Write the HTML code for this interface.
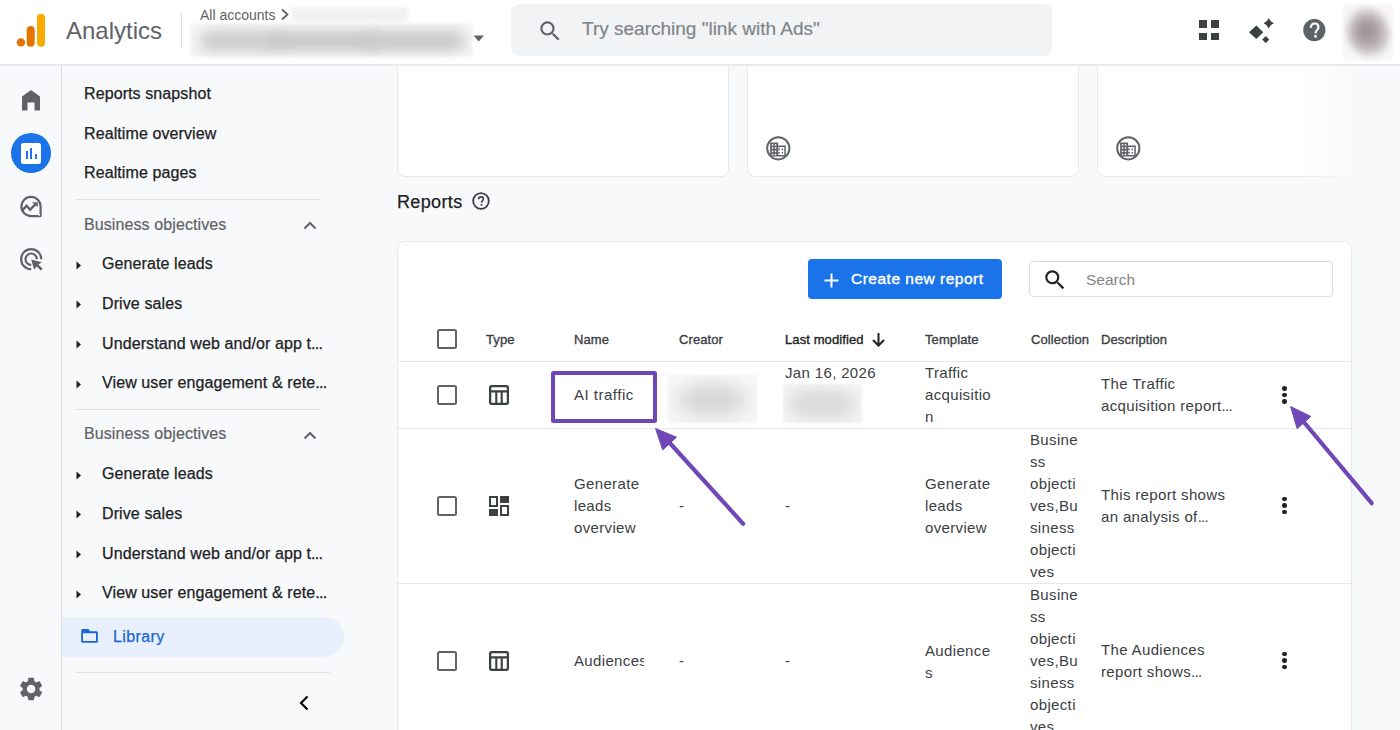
<!DOCTYPE html>
<html><head><meta charset="utf-8">
<style>
*{box-sizing:border-box;margin:0;padding:0}
html,body{width:1400px;height:730px;overflow:hidden;background:#f8f9fa;font-family:"Liberation Sans",sans-serif;color:#202124}
.a{position:absolute}
.t{position:absolute;white-space:nowrap;line-height:1}
#hdr{position:absolute;left:0;top:0;width:1400px;height:66px;background:#fff;border-bottom:2px solid #e9eaed}
#rail{position:absolute;left:0;top:66px;width:62px;height:664px;background:#f8f9fa;border-right:1px solid #dadce0}
.mi{position:absolute;font-size:16px;letter-spacing:0.1px;-webkit-text-stroke:0.25px currentColor;color:#202124;white-space:nowrap;line-height:1}
.sec{position:absolute;font-size:16px;letter-spacing:0.1px;-webkit-text-stroke:0.2px currentColor;color:#5f6368;white-space:nowrap;line-height:1}
.div{position:absolute;height:1px;background:#e3e3e3}
.card{position:absolute;background:#fff;border:1px solid #e6e8eb;border-radius:8px}
.th{position:absolute;font-size:13px;letter-spacing:0.1px;-webkit-text-stroke:0.35px currentColor;color:#3c4043;white-space:nowrap;line-height:1}
.td{position:absolute;font-size:15px;letter-spacing:0.35px;color:#3c4043;white-space:nowrap;line-height:22px;margin-top:1px}
.cb{position:absolute;width:20px;height:20px;border:2.2px solid #5f6368;border-radius:2.5px;margin-left:0.6px}
.rowdiv{position:absolute;left:398px;width:953px;height:1px;background:#e6e8eb}
.kb{position:absolute;width:4.6px;height:4.6px;border-radius:50%;background:#202124}
</style></head><body>

<!-- HEADER -->
<div id="hdr"></div>
<svg class="a" style="left:16px;top:13px" width="30" height="34" viewBox="0 0 30 34">
  <rect x="21" y="0.7" width="8" height="33" rx="4" fill="#f9ab00"/>
  <rect x="10.7" y="13" width="8" height="20.7" rx="4" fill="#e37400"/>
  <circle cx="4.9" cy="29.4" r="4.2" fill="#e37400"/>
</svg>
<div class="t" style="left:66px;top:19px;font-size:24px;color:#5f6368">Analytics</div>
<div class="a" style="left:181px;top:13px;width:1px;height:35px;background:#dadce0"></div>
<div class="t" style="left:200px;top:8px;font-size:14px;color:#5f6368">All accounts</div>
<svg class="a" style="left:279px;top:8px" width="12" height="13" viewBox="0 0 12 13"><path d="M3 1.5 L8.5 6.5 L3 11.5" stroke="#5f6368" stroke-width="1.8" fill="none"/></svg>
<div class="a" style="left:291px;top:7px;width:117px;height:14px;background:#f1f1f1;filter:blur(2px)"></div>
<div class="a" style="left:190px;top:24px;width:282px;height:32px;background:#f3f3f3;filter:blur(1px)"></div>
<div class="a" style="left:200px;top:31px;width:85px;height:20px;background:#cdcdcd;border-radius:10px;filter:blur(6px)"></div>
<div class="a" style="left:270px;top:31px;width:110px;height:20px;background:#c9c9c9;border-radius:10px;filter:blur(6px)"></div>
<div class="a" style="left:365px;top:31px;width:100px;height:20px;background:#cbcbcb;border-radius:10px;filter:blur(6px)"></div>
<svg class="a" style="left:473px;top:35px" width="12" height="7" viewBox="0 0 12 7"><path d="M0.5 0.5 L11 0.5 L5.75 6.5 Z" fill="#5f6368"/></svg>

<div class="a" style="left:511px;top:4px;width:541px;height:52px;background:#f1f3f4;border-radius:8px"></div>
<svg class="a" style="left:537px;top:17.5px" width="26.4" height="26.4" viewBox="0 0 24 24"><path fill="#5f6368" d="M15.5 14h-.79l-.28-.27A6.471 6.471 0 0 0 16 9.5 6.5 6.5 0 1 0 9.5 16c1.61 0 3.09-.59 4.23-1.57l.27.28v.79l5 4.99L20.49 19l-4.99-5zm-6 0C7.01 14 5 11.99 5 9.5S7.01 5 9.5 5 14 7.01 14 9.5 11.99 14 9.5 14z"/></svg>
<div class="t" style="left:582px;top:19px;font-size:19px;-webkit-text-stroke:0.2px #80868b;color:#80868b">Try searching "link with Ads"</div>

<!-- apps grid -->
<div class="a" style="left:1199px;top:20px;width:7.5px;height:7.5px;background:#3c4043"></div>
<div class="a" style="left:1211px;top:20px;width:7.5px;height:7.5px;background:#3c4043"></div>
<div class="a" style="left:1199px;top:32.5px;width:7.5px;height:7.5px;background:#3c4043"></div>
<div class="a" style="left:1211px;top:32.5px;width:7.5px;height:7.5px;background:#3c4043"></div>
<!-- sparkle -->
<svg class="a" style="left:1248px;top:17px" width="28" height="28" viewBox="0 0 28 28">
  <path d="M1 15.2 L8.3 8.4 L15.3 15.2 L8.3 22.1 Z" fill="#3c4043"/>
  <path d="M14.2 22.5 L17.8 19 L21.2 22.5 L17.8 26.2 Z" fill="#3c4043"/>
  <path d="M20.8 1.1 Q22.2 4.9 26 6.3 Q22.2 7.7 20.8 11.6 Q19.4 7.7 15.6 6.3 Q19.4 4.9 20.8 1.1 Z" fill="#3c4043"/>
</svg>
<!-- help -->
<svg class="a" style="left:1303px;top:19px" width="23" height="23" viewBox="0 0 24 24"><circle cx="11.8" cy="11.5" r="11.6" fill="#5f6368"/><path d="M8.1 9.1 C8.1 6.4 9.8 4.7 12.1 4.7 C14.4 4.7 16.1 6.3 16.1 8.5 C16.1 11.4 13.1 11.8 13.1 15" stroke="#fff" stroke-width="2.3" fill="none"/><rect x="11.8" y="16.8" width="2.6" height="2.6" fill="#fff"/></svg>
<!-- avatar blurred -->
<div class="a" style="left:1343px;top:3.5px;width:50px;height:57px;background:#f8f7f7;filter:blur(1.5px)"></div>
<div class="a" style="left:1352px;top:18px;width:38px;height:38px;border-radius:50%;background:radial-gradient(circle at 50% 50%,#a9a5b6 0%,rgba(200,198,210,0.7) 50%,rgba(248,247,247,0) 100%);filter:blur(3px)"></div>
<div class="a" style="left:1346px;top:8px;width:42px;height:46px;border-radius:50%;background:radial-gradient(ellipse at 50% 50%,#9d8f93 0%,#a89c9f 28%,rgba(200,190,192,0.8) 58%,rgba(248,247,247,0) 100%);filter:blur(3px)"></div>

<!-- RAIL -->
<div id="rail"></div>
<svg class="a" style="left:22px;top:90px" width="18" height="21" viewBox="0 0 18 21"><path d="M0 6.5 L9 0 L18 6.5 L18 20.5 L12.5 20.5 L12.5 12.5 L5.5 12.5 L5.5 20.5 L0 20.5 Z" fill="#5f6368"/></svg>
<div class="a" style="left:11px;top:133px;width:40px;height:40px;border-radius:50%;background:#1a73e8"></div>
<div class="a" style="left:21px;top:143px;width:20px;height:20.5px;border-radius:2.5px;background:#fff"></div>
<div class="a" style="left:25.5px;top:151px;width:2px;height:8px;background:#1a73e8"></div>
<div class="a" style="left:30px;top:148px;width:2px;height:11px;background:#1a73e8"></div>
<div class="a" style="left:34.5px;top:154px;width:2px;height:5px;background:#1a73e8"></div>
<svg class="a" style="left:19px;top:194px" width="24" height="24" viewBox="0 0 24 24">
  <path d="M12 22.1 A9.6 9.6 0 1 1 21.6 12.5 L21.6 22.1 Z" fill="none" stroke="#5f6368" stroke-width="2.2" stroke-linejoin="round"/>
  <path d="M3.2 16.6 L7.6 11.8 L11.1 15.7 L16.6 10.2" fill="none" stroke="#5f6368" stroke-width="2.4"/>
  <path d="M12.9 8.3 L18.8 8.3 L18.8 12.9 Z" fill="#5f6368"/>
  <circle cx="20.3" cy="20.8" r="0.9" fill="#fff"/>
</svg>
<svg class="a" style="left:19px;top:247px" width="25" height="25" viewBox="0 0 25 25">
  <path d="M12.2 22.3 A10.1 10.1 0 1 1 22.3 12.2" fill="none" stroke="#5f6368" stroke-width="2.2"/>
  <path d="M12.2 17.9 A5.7 5.7 0 1 1 17.9 12.2" fill="none" stroke="#5f6368" stroke-width="2.2"/>
  <path d="M12.2 12.4 L22.8 15.3 L19.4 17.6 L23.6 21.8 L21.8 23.6 L17.6 19.4 L15.1 22.8 Z" fill="#5f6368"/>
</svg>
<svg class="a" style="left:16.9px;top:674.8px" width="28.2" height="28.2" viewBox="0 0 24 24"><path fill="#5f6368" d="M19.14 12.94c.04-.3.06-.61.06-.94 0-.32-.02-.64-.07-.94l2.03-1.58a.49.49 0 0 0 .12-.61l-1.92-3.32a.488.488 0 0 0-.59-.22l-2.39.96c-.5-.38-1.03-.7-1.62-.94l-.36-2.54a.484.484 0 0 0-.48-.41h-3.84c-.24 0-.43.17-.47.41l-.36 2.54c-.59.24-1.13.57-1.62.94l-2.39-.96c-.22-.08-.47 0-.59.22L2.74 8.87c-.12.21-.08.47.12.61l2.03 1.58c-.05.3-.09.63-.09.94s.02.64.07.94l-2.03 1.58a.49.49 0 0 0-.12.61l1.92 3.32c.12.22.37.29.59.22l2.39-.96c.5.38 1.03.7 1.62.94l.36 2.54c.05.24.24.41.48.41h3.84c.24 0 .44-.17.47-.41l.36-2.54c.59-.24 1.13-.56 1.62-.94l2.39.96c.22.08.47 0 .59-.22l1.92-3.32c.12-.22.07-.47-.12-.61l-2.01-1.58zM12 15.6c-1.98 0-3.6-1.62-3.6-3.6s1.62-3.6 3.6-3.6 3.6 1.62 3.6 3.6-1.62 3.6-3.6 3.6z"/></svg>

<!-- SIDE MENU -->
<div class="mi" style="left:84px;top:85.6px">Reports snapshot</div>
<div class="mi" style="left:84px;top:125.5px">Realtime overview</div>
<div class="mi" style="left:84px;top:165.1px">Realtime pages</div>
<div class="div" style="left:75px;top:199px;width:245px"></div>

<div class="sec" style="left:84px;top:216.5px">Business objectives</div>
<svg class="a" style="left:303px;top:220px" width="14" height="10" viewBox="0 0 14 10"><path d="M1.5 8.5 L7 3 L12.5 8.5" stroke="#5f6368" stroke-width="2" fill="none"/></svg>
<div class="mi" style="left:102px;top:256.3px">Generate leads</div>
<div class="mi" style="left:102px;top:295.9px">Drive sales</div>
<div class="mi" style="left:102px;top:335.7px">Understand web and/or app t<span style="letter-spacing:-0.7px">...</span></div>
<div class="mi" style="left:102px;top:375.1px">View user engagement &amp; rete<span style="letter-spacing:-0.7px">...</span></div>
<div class="div" style="left:75px;top:409px;width:245px"></div>

<div class="sec" style="left:84px;top:426.4px">Business objectives</div>
<svg class="a" style="left:303px;top:430px" width="14" height="10" viewBox="0 0 14 10"><path d="M1.5 8.5 L7 3 L12.5 8.5" stroke="#5f6368" stroke-width="2" fill="none"/></svg>
<div class="mi" style="left:102px;top:466.0px">Generate leads</div>
<div class="mi" style="left:102px;top:505.5px">Drive sales</div>
<div class="mi" style="left:102px;top:545.7px">Understand web and/or app t<span style="letter-spacing:-0.7px">...</span></div>
<div class="mi" style="left:102px;top:585.2px">View user engagement &amp; rete<span style="letter-spacing:-0.7px">...</span></div>

<svg class="a" style="left:76px;top:260.8px" width="6" height="9" viewBox="0 0 6 9"><path d="M0.5 0.5 L5 4.5 L0.5 8.5 Z" fill="#202124"/></svg>
<svg class="a" style="left:76px;top:300.4px" width="6" height="9" viewBox="0 0 6 9"><path d="M0.5 0.5 L5 4.5 L0.5 8.5 Z" fill="#202124"/></svg>
<svg class="a" style="left:76px;top:340.2px" width="6" height="9" viewBox="0 0 6 9"><path d="M0.5 0.5 L5 4.5 L0.5 8.5 Z" fill="#202124"/></svg>
<svg class="a" style="left:76px;top:379.6px" width="6" height="9" viewBox="0 0 6 9"><path d="M0.5 0.5 L5 4.5 L0.5 8.5 Z" fill="#202124"/></svg>
<svg class="a" style="left:76px;top:470.5px" width="6" height="9" viewBox="0 0 6 9"><path d="M0.5 0.5 L5 4.5 L0.5 8.5 Z" fill="#202124"/></svg>
<svg class="a" style="left:76px;top:510px" width="6" height="9" viewBox="0 0 6 9"><path d="M0.5 0.5 L5 4.5 L0.5 8.5 Z" fill="#202124"/></svg>
<svg class="a" style="left:76px;top:550.2px" width="6" height="9" viewBox="0 0 6 9"><path d="M0.5 0.5 L5 4.5 L0.5 8.5 Z" fill="#202124"/></svg>
<svg class="a" style="left:76px;top:589.7px" width="6" height="9" viewBox="0 0 6 9"><path d="M0.5 0.5 L5 4.5 L0.5 8.5 Z" fill="#202124"/></svg>

<div class="a" style="left:62px;top:617px;width:282px;height:40px;background:#e8f0fe;border-radius:0 20px 20px 0"></div>
<svg class="a" style="left:80px;top:628px" width="19" height="16" viewBox="0 0 19 16"><path fill-rule="evenodd" fill="#1967d2" d="M2.7 1 H8.3 L10.3 3.3 H16.4 Q17.9 3.3 17.9 4.8 V13.3 Q17.9 14.8 16.4 14.8 H2.7 Q1.2 14.8 1.2 13.3 V2.5 Q1.2 1 2.7 1 Z M3 5.2 V13 H16 V5.2 Z"/></svg>
<div class="mi" style="left:113px;top:629px;color:#1967d2;letter-spacing:0.4px">Library</div>
<div class="div" style="left:76px;top:672px;width:254px"></div>
<svg class="a" style="left:298px;top:695px" width="12" height="16" viewBox="0 0 12 16"><path d="M9.5 1.5 L3 8 L9.5 14.5" stroke="#000" stroke-width="2.2" fill="none"/></svg>

<!-- TOP CARDS -->
<div class="a" style="left:0;top:66px;width:1400px;height:120px;overflow:hidden">
<div class="card" style="left:397px;top:-26px;width:332px;height:137px"></div>
<div class="card" style="left:747px;top:-26px;width:332px;height:137px"></div>
<div class="card" style="left:1097px;top:-26px;width:332px;height:137px"></div>
<div class="a" style="left:1300px;top:-26px;width:100px;height:140px;background:linear-gradient(to right,rgba(248,249,250,0),#f8f9fa 51px)"></div>
</div>
<!-- building icons -->
<svg class="a" style="left:766px;top:136px" width="25" height="25" viewBox="0 0 25 25">
  <circle cx="12.3" cy="12.3" r="11.1" fill="none" stroke="#5f6368" stroke-width="2"/>
  <path d="M4.1 20.5 L4.1 6.5 L12 6.5 L12 9.5 L19.8 9.5 L19.8 20.5 Z" fill="#5f6368"/>
  <g fill="#fff">
   <rect x="5.8" y="8.2" width="1.5" height="1.5"/><rect x="8.8" y="8.2" width="1.5" height="1.5"/>
   <rect x="5.8" y="11.2" width="1.5" height="1.5"/><rect x="8.8" y="11.2" width="1.5" height="1.5"/>
   <rect x="5.8" y="14.6" width="1.5" height="1.5"/><rect x="8.8" y="14.6" width="1.5" height="1.5"/>
   <rect x="5.8" y="17.8" width="1.5" height="1.5"/><rect x="8.8" y="17.8" width="1.5" height="1.5"/>
   <rect x="12.3" y="11.1" width="6" height="7.9"/>
  </g>
  <g fill="#5f6368"><rect x="12.3" y="12.6" width="1.5" height="1.5"/><rect x="15.6" y="12.6" width="1.5" height="1.5"/><rect x="12.3" y="16" width="1.5" height="1.5"/><rect x="15.6" y="16" width="1.5" height="1.5"/></g>
</svg>
<svg class="a" style="left:1116px;top:136px" width="25" height="25" viewBox="0 0 25 25">
  <circle cx="12.3" cy="12.3" r="11.1" fill="none" stroke="#5f6368" stroke-width="2"/>
  <path d="M4.1 20.5 L4.1 6.5 L12 6.5 L12 9.5 L19.8 9.5 L19.8 20.5 Z" fill="#5f6368"/>
  <g fill="#fff">
   <rect x="5.8" y="8.2" width="1.5" height="1.5"/><rect x="8.8" y="8.2" width="1.5" height="1.5"/>
   <rect x="5.8" y="11.2" width="1.5" height="1.5"/><rect x="8.8" y="11.2" width="1.5" height="1.5"/>
   <rect x="5.8" y="14.6" width="1.5" height="1.5"/><rect x="8.8" y="14.6" width="1.5" height="1.5"/>
   <rect x="5.8" y="17.8" width="1.5" height="1.5"/><rect x="8.8" y="17.8" width="1.5" height="1.5"/>
   <rect x="12.3" y="11.1" width="6" height="7.9"/>
  </g>
  <g fill="#5f6368"><rect x="12.3" y="12.6" width="1.5" height="1.5"/><rect x="15.6" y="12.6" width="1.5" height="1.5"/><rect x="12.3" y="16" width="1.5" height="1.5"/><rect x="15.6" y="16" width="1.5" height="1.5"/></g>
</svg>

<!-- REPORTS TITLE -->
<div class="t" style="left:397px;top:193px;font-size:18px;letter-spacing:0.35px;-webkit-text-stroke:0.25px #202124;color:#202124">Reports</div>
<svg class="a" style="left:472px;top:192px" width="18" height="18" viewBox="0 0 18 18"><circle cx="9" cy="9" r="7.8" fill="none" stroke="#3c4043" stroke-width="1.8"/><path d="M6.6 7.2 C6.6 5.8 7.6 4.9 9 4.9 C10.4 4.9 11.4 5.8 11.4 7 C11.4 8.6 9.5 8.7 9.5 10.7" stroke="#3c4043" stroke-width="1.6" fill="none"/><rect x="8.6" y="12" width="1.7" height="1.7" fill="#3c4043"/></svg>

<!-- TABLE CARD -->
<div class="card" style="left:397px;top:241px;width:955px;height:520px"></div>
<div class="a" style="left:808px;top:259px;width:194px;height:40px;background:#1a73e8;border-radius:4px"></div>
<svg class="a" style="left:824px;top:272.5px" width="15" height="15" viewBox="0 0 15 15"><path d="M7.5 0.5 V14.5 M0.5 7.5 H14.5" stroke="#fff" stroke-width="2"/></svg>
<div class="t" style="left:851px;top:271px;font-size:15.5px;letter-spacing:0.5px;-webkit-text-stroke:0.4px #fff;color:#fff">Create new report</div>

<div class="a" style="left:1029px;top:261px;width:304px;height:36px;border:1px solid #dadce0;border-radius:4px;background:#fff"></div>
<svg class="a" style="left:1042px;top:267px" width="26" height="26" viewBox="0 0 24 24"><path fill="#202124" d="M15.5 14h-.79l-.28-.27A6.471 6.471 0 0 0 16 9.5 6.5 6.5 0 1 0 9.5 16c1.61 0 3.09-.59 4.23-1.57l.27.28v.79l5 4.99L20.49 19l-4.99-5zm-6 0C7.01 14 5 11.99 5 9.5S7.01 5 9.5 5 14 7.01 14 9.5 11.99 14 9.5 14z"/></svg>
<div class="t" style="left:1086px;top:272px;font-size:15.5px;color:#80868b">Search</div>

<!-- header row -->
<div class="cb" style="left:436px;top:329px"></div>
<div class="th" style="left:486px;top:333px">Type</div>
<div class="th" style="left:574px;top:333px">Name</div>
<div class="th" style="left:679px;top:333px">Creator</div>
<div class="th" style="left:785px;top:333px;color:#202124">Last modified</div>
<svg class="a" style="left:871px;top:332px" width="15" height="15" viewBox="0 0 15 15"><path d="M7.5 1 V13.5 M2 8 L7.5 13.5 L13 8" stroke="#202124" stroke-width="2" fill="none"/></svg>
<div class="th" style="left:925px;top:333px">Template</div>
<div class="th" style="left:1031px;top:333px">Collection</div>
<div class="th" style="left:1101px;top:333px">Description</div>
<div class="rowdiv" style="top:361px"></div>

<!-- row 1 -->
<div class="cb" style="left:436px;top:385px"></div>
<svg class="a" style="left:489px;top:385px" width="20" height="20" viewBox="0 0 20 20"><rect x="1.1" y="1.1" width="17.8" height="17.8" rx="1.6" fill="none" stroke="#3c4043" stroke-width="2.3"/><path d="M1 6.4 H19 M7.3 6.4 V19 M12.7 6.4 V19" stroke="#3c4043" stroke-width="2.1"/></svg>
<div class="a" style="left:551px;top:371px;width:106px;height:52px;border:4.5px solid #7048b6;border-radius:2.5px"></div>
<div class="td" style="left:574px;top:383px;letter-spacing:0.5px">AI traffic</div>
<div class="a" style="left:667px;top:375px;width:90px;height:48px;background:#f6f6f6;overflow:hidden;filter:blur(1px)"><div class="a" style="left:10px;top:8px;width:70px;height:34px;border-radius:50%;background:#d8d8d8;filter:blur(8px)"></div></div>
<div class="td" style="left:785px;top:361px">Jan 16, 2026</div>
<div class="a" style="left:783px;top:384px;width:79px;height:39px;background:#f3f3f3;overflow:hidden;filter:blur(1px)"><div class="a" style="left:6px;top:6px;width:66px;height:28px;border-radius:40%;background:#dadada;filter:blur(7px)"></div></div>
<div class="td" style="left:925px;top:361px">Traffic<br>acquisitio<br>n</div>
<div class="td" style="left:1101px;top:372px">The Traffic<br>acquisition report<span style="letter-spacing:-0.7px">...</span></div>
<div class="rowdiv" style="top:428px"></div>

<!-- row 2 -->
<div class="cb" style="left:436px;top:496px"></div>
<svg class="a" style="left:489px;top:496px" width="20" height="20" viewBox="0 0 20 20"><path d="M0 0 H9 V11 H0 Z M11 0 H20 V7 H11 Z M0 13 H9 V20 H0 Z M11 9 H20 V20 H11 Z" fill="#3c4043"/><path d="M2 2 H7 V9 H2 Z M13 11 H18 V18 H13 Z" fill="#fff"/></svg>
<div class="td" style="left:574px;top:472px">Generate<br>leads<br>overview</div>
<div class="td" style="left:679px;top:494px">-</div>
<div class="td" style="left:785px;top:494px">-</div>
<div class="td" style="left:925px;top:472px">Generate<br>leads<br>overview</div>
<div class="td" style="left:1030px;top:428px">Busine<br>ss<br>objecti<br>ves,Bu<br>siness<br>objecti<br>ves</div>
<div class="td" style="left:1101px;top:483px">This report shows<br>an analysis of<span style="letter-spacing:-0.7px">...</span></div>
<div class="rowdiv" style="top:583px"></div>

<!-- row 3 -->
<div class="cb" style="left:436px;top:651px"></div>
<svg class="a" style="left:489px;top:651px" width="20" height="20" viewBox="0 0 20 20"><rect x="1.1" y="1.1" width="17.8" height="17.8" rx="1.6" fill="none" stroke="#3c4043" stroke-width="2.3"/><path d="M1 6.4 H19 M7.3 6.4 V19 M12.7 6.4 V19" stroke="#3c4043" stroke-width="2.1"/></svg>
<div class="td" style="left:574px;top:649px;width:70px;overflow:hidden">Audiences</div>
<div class="td" style="left:679px;top:649px">-</div>
<div class="td" style="left:785px;top:649px">-</div>
<div class="td" style="left:925px;top:639px">Audience<br>s</div>
<div class="td" style="left:1030px;top:583px">Busine<br>ss<br>objecti<br>ves,Bu<br>siness<br>objecti<br>ves</div>
<div class="td" style="left:1101px;top:638px">The Audiences<br>report shows<span style="letter-spacing:-0.7px">...</span></div>

<div class="kb" style="left:1282.4px;top:386.4px"></div>
<div class="kb" style="left:1282.4px;top:392.9px"></div>
<div class="kb" style="left:1282.4px;top:399.4px"></div>
<div class="kb" style="left:1282.4px;top:496.8px"></div>
<div class="kb" style="left:1282.4px;top:503.3px"></div>
<div class="kb" style="left:1282.4px;top:509.8px"></div>
<div class="kb" style="left:1282.4px;top:651.7px"></div>
<div class="kb" style="left:1282.4px;top:658.2px"></div>
<div class="kb" style="left:1282.4px;top:664.7px"></div>
<!-- ARROWS -->
<svg class="a" style="left:0;top:0" width="1400" height="730" viewBox="0 0 1400 730">
  <line x1="743.2" y1="523.8" x2="668" y2="441" stroke="#7048b6" stroke-width="4.2" stroke-linecap="round"/>
  <path d="M655.6 428.5 L676.5 437.2 L662.7 449.9 Z" fill="#7048b6" stroke="#7048b6" stroke-width="1" stroke-linejoin="round"/>
  <line x1="1371.7" y1="503.2" x2="1303" y2="421" stroke="#7048b6" stroke-width="4.2" stroke-linecap="round"/>
  <path d="M1290.6 406.5 L1310.8 416.4 L1297.2 428.7 Z" fill="#7048b6" stroke="#7048b6" stroke-width="1" stroke-linejoin="round"/>
</svg>
</body></html>
